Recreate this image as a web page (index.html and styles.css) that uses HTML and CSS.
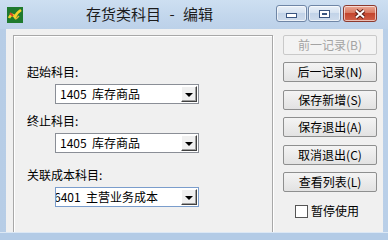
FILE: index.html
```html
<!DOCTYPE html>
<html lang="zh-CN">
<head>
  <meta charset="UTF-8" />
  <title>存货类科目 - 编辑</title>
  <meta name="viewport" content="width=device-width, initial-scale=1" />
  <link rel="stylesheet" href="styles.css">
</head>
<body>
  <div class="window">
    <div class="titlebar">
      <svg class="app-icon" width="16" height="16" viewBox="0 0 16 16">
        <rect width="16" height="16" fill="#1f7a2e"/>
        <path d="M2 11 C4 7, 6 7, 8 10 C9 7, 11 5, 14 3" stroke="#f3d22c" stroke-width="2.6" fill="none"/>
        <path d="M3 6 L6 9" stroke="#d8462a" stroke-width="2"/>
        <path d="M9 12 L12 9" stroke="#e8b43a" stroke-width="1.5"/>
      </svg>
      <div class="title">存货类科目 - 编辑</div>
      <div class="caption-buttons">
        <span class="cap-btn cap-min"><i></i></span>
        <span class="cap-btn cap-max"><i></i></span>
        <span class="cap-btn cap-close">
          <svg width="14" height="10" viewBox="0 0 14 10">
            <path d="M3 1.5 L11 8.5 M11 1.5 L3 8.5" stroke="#5a1a12" stroke-width="4"/>
            <path d="M3 1.5 L11 8.5 M11 1.5 L3 8.5" stroke="#fff" stroke-width="2"/>
          </svg>
        </span>
      </div>
    </div>

    <div class="client">
      <div class="panel">
        <div class="field field-first">
          <div class="field-label">起始科目:</div>
          <div class="combo">
            <span class="combo-text">1405&nbsp; 库存商品</span>
            <span class="drop"><i></i></span>
          </div>
        </div>
        <div class="field field-second">
          <div class="field-label">终止科目:</div>
          <div class="combo">
            <span class="combo-text">1405&nbsp; 库存商品</span>
            <span class="drop"><i></i></span>
          </div>
        </div>
        <div class="field field-third">
          <div class="field-label">关联成本科目:</div>
          <div class="combo focused">
            <span class="combo-text">6401&nbsp; 主营业务成本</span>
            <span class="drop"><i></i></span>
          </div>
        </div>
      </div>

      <div class="actions">
        <button disabled>前一记录(B)</button>
        <button>后一记录(N)</button>
        <button>保存新增(S)</button>
        <button>保存退出(A)</button>
        <button>取消退出(C)</button>
        <button>查看列表(L)</button>
        <label class="check"><span class="box"></span>暂停使用</label>
      </div>
    </div>
    <div class="bottom-frame"></div>
  </div>
</body>
</html>
```

FILE: styles.css
```css
body {
  margin: 0;
  font-family: "Noto Sans CJK SC", "Liberation Sans", sans-serif;
  font-size: 12px;
  color: #000;
}
.window {
  width: 388px;
  height: 240px;
  overflow: hidden;
  display: flex;
  flex-direction: column;
  background: linear-gradient(90deg, #b7cde6 0%, #c4d8ee 50%, #b9cfe8 100%);
}

/* Titelleiste */
.titlebar {
  height: 29px;
  flex: none;
  display: flex;
  align-items: flex-start;
  background: linear-gradient(180deg, #cddff1 0%, #c2d6ec 60%, #bcd1e9 100%);
}
.app-icon {
  margin: 7px 0 0 7px;
  flex: none;
}
.title {
  flex: 1;
  text-align: center;
  font-size: 15px;
  line-height: 28px;
  color: #1c1c1c;
  word-spacing: 5px;
}
.caption-buttons {
  display: flex;
  gap: 1px;
  margin: 5px 11px 0 0;
}
.cap-btn {
  height: 17px;
  box-sizing: border-box;
  border: 1px solid #6f86a6;
  border-radius: 3px;
  display: flex;
  align-items: center;
  justify-content: center;
  background: linear-gradient(180deg, #e9f0f8 0%, #d6e2f0 45%, #c2d3e8 50%, #cfdcec 100%);
  box-shadow: inset 0 0 0 1px rgba(255,255,255,0.6);
}
.cap-min { width: 31px; }
.cap-max { width: 33px; margin-right: 1px; }
.cap-close {
  width: 34px;
  border-color: #8c3a2e;
  background: linear-gradient(180deg, #eba995 0%, #d97a62 45%, #c4452d 50%, #d0614a 100%);
}
.cap-min i {
  width: 9px;
  height: 3px;
  margin-top: 4px;
  background: #fff;
  border: 1px solid #3a5580;
}
.cap-max i {
  width: 9px;
  height: 6px;
  border: 1px solid #3a5580;
  background: #c9d8ea;
  box-shadow: inset 0 0 0 2px #fff, inset 0 0 0 3px #3a5580;
}

/* Client-Bereich */
.client {
  height: 203px;
  flex: none;
  margin: 0 5px 0 6px;
  background: #f0f0f0;
  display: flex;
  align-items: flex-start;
  overflow: hidden;
}
.bottom-frame {
  flex: 1;
  border-top: 1px solid #dce8f5;
  background: #b3cbe6;
}
.panel {
  width: 260px;
  height: 230px;
  flex: none;
  box-sizing: border-box;
  margin: 6px 0 0 7px;
  padding-left: 13px;
  border: 1px solid #a8a8a8;
  box-shadow: 1px 1px 0 #fff, inset 1px 1px 0 #fff;
}
.field-label {
  line-height: 16px;
}
.field-first { margin-top: 28px; }
.field-second { margin-top: 9px; }
.field-third { margin-top: 14px; }
.combo {
  width: 144px;
  height: 20px;
  box-sizing: border-box;
  margin: 4px 0 0 28px;
  border: 1px solid #8a8e96;
  background: #fff;
  display: flex;
  align-items: center;
}
.combo.focused {
  border-color: #7a9dcc;
}
.combo-text {
  flex: 1;
  padding-left: 4px;
  line-height: 18px;
  white-space: nowrap;
  overflow: hidden;
}
.combo.focused .combo-text {
  padding-left: 0;
  text-indent: -2px;
}
.drop {
  width: 16px;
  height: 16px;
  box-sizing: border-box;
  margin-right: 1px;
  background: #f0f0f0;
  border: 1px solid;
  border-color: #fff #404040 #404040 #fff;
  box-shadow: inset -1px -1px 0 #a0a0a0;
  display: flex;
  align-items: center;
  justify-content: center;
}
.drop i {
  width: 0;
  height: 0;
  border-left: 4px solid transparent;
  border-right: 4px solid transparent;
  border-top: 4px solid #000;
  margin: 1px 1px 0 0;
}

/* Schaltflächen rechts */
.actions {
  margin: 6px 0 0 10px;
  display: flex;
  flex-direction: column;
  gap: 7.4px;
}
button {
  width: 94px;
  height: 20px;
  padding: 0;
  font-family: inherit;
  font-size: 12px;
  line-height: 18px;
  color: #000;
  border: 1px solid #8e8f8f;
  border-radius: 2px;
  background: linear-gradient(180deg, #f4f4f4 0%, #ebebeb 50%, #e2e2e2 100%);
}
button:disabled {
  color: #a3a3a3;
  border-color: #c9c9c9;
  background: #f3f3f3;
}
.check {
  display: flex;
  align-items: center;
  gap: 3px;
  margin: 4px 0 0 12px;
  line-height: 16px;
}
.check .box {
  width: 13px;
  height: 13px;
  box-sizing: border-box;
  border: 1px solid #555;
  background: #fff;
}
```
